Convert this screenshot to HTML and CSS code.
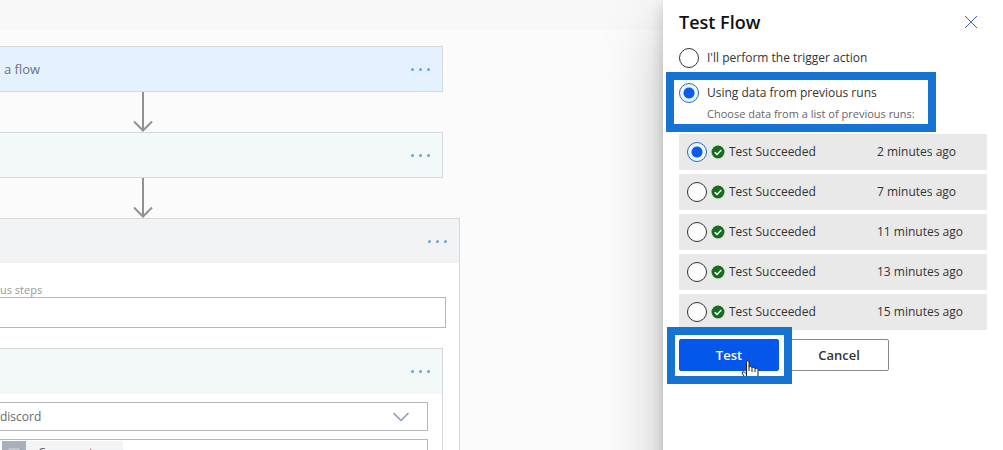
FILE: index.html
```html
<!DOCTYPE html>
<html lang="en">
<head>
<meta charset="utf-8">
<title>Test Flow</title>
<link rel="stylesheet" href="styles.css">
</head>
<body>
<div class="page">
	<main class="designer">
		<div class="toolbar"></div>
		<div class="canvas">
			<div class="card trigger">
				<span>a flow</span>
				<button class="dots" aria-label="Menu"><i></i><i></i><i></i></button>
			</div>
			<svg class="arrow" width="20" height="40" viewBox="0 0 20 40"><path d="M10 0V38M1 29.500L10 38.500L19 29.500"/></svg>
			<div class="card action">
				<button class="dots" aria-label="Menu"><i></i><i></i><i></i></button>
			</div>
			<svg class="arrow" width="20" height="40" viewBox="0 0 20 40"><path d="M10 0V38M1 29.500L10 38.500L19 29.500"/></svg>
			<div class="scope">
				<div class="scope-head">
					<button class="dots" aria-label="Menu"><i></i><i></i><i></i></button>
				</div>
				<label class="field-label" for="steps">us steps</label>
				<input class="field" id="steps" type="text">
				<div class="inner">
					<div class="inner-head">
						<button class="dots" aria-label="Menu"><i></i><i></i><i></i></button>
					</div>
					<div class="inner-body">
						<div class="picker">
							<select aria-label="Channel"><option>discord</option></select>
							<svg class="chevron" width="16" height="10" viewBox="0 0 16 10"><path d="M0.500 1L8 8.500L15.500 1"/></svg>
						</div>
						<div class="message">
							<div class="token">
								<span class="token-icon"><svg width="24" height="24" viewBox="0 0 24 24"><path d="M7 8h10v8H7zM7 11h10M12 8v8"/></svg></span>
								<span>Comment</span>
							</div>
						</div>
					</div>
				</div>
			</div>
		</div>
	</main>

	<form class="panel" onsubmit="return false">
		<div class="panel-head">
			<h1>Test Flow</h1>
			<button class="close" type="button" aria-label="Close"><svg width="12" height="12" viewBox="0 0 12 12"><path d="M0 0L12 12M12 0L0 12"/></svg></button>
		</div>
		<div class="option">
			<input type="radio" name="mode" id="manual">
			<label for="manual">I'll perform the trigger action</label>
		</div>
		<div class="marked option-marked">
			<div class="option">
				<input type="radio" name="mode" id="previous" checked>
				<label for="previous">Using data from previous runs</label>
			</div>
			<p class="hint">Choose data from a list of previous runs:</p>
		</div>
		<div class="runs">
			<div class="run">
				<input type="radio" name="run" id="run1" checked>
				<svg class="ok" width="14" height="14" viewBox="0 0 14 14"><circle cx="7" cy="7" r="6.500"/><path d="M3.700 7.200L6 9.400L10.300 5"/></svg>
				<label for="run1">Test Succeeded</label>
				<span>2 minutes ago</span>
			</div>
			<div class="run">
				<input type="radio" name="run" id="run2">
				<svg class="ok" width="14" height="14" viewBox="0 0 14 14"><circle cx="7" cy="7" r="6.500"/><path d="M3.700 7.200L6 9.400L10.300 5"/></svg>
				<label for="run2">Test Succeeded</label>
				<span>7 minutes ago</span>
			</div>
			<div class="run">
				<input type="radio" name="run" id="run3">
				<svg class="ok" width="14" height="14" viewBox="0 0 14 14"><circle cx="7" cy="7" r="6.500"/><path d="M3.700 7.200L6 9.400L10.300 5"/></svg>
				<label for="run3">Test Succeeded</label>
				<span>11 minutes ago</span>
			</div>
			<div class="run">
				<input type="radio" name="run" id="run4">
				<svg class="ok" width="14" height="14" viewBox="0 0 14 14"><circle cx="7" cy="7" r="6.500"/><path d="M3.700 7.200L6 9.400L10.300 5"/></svg>
				<label for="run4">Test Succeeded</label>
				<span>13 minutes ago</span>
			</div>
			<div class="run">
				<input type="radio" name="run" id="run5">
				<svg class="ok" width="14" height="14" viewBox="0 0 14 14"><circle cx="7" cy="7" r="6.500"/><path d="M3.700 7.200L6 9.400L10.300 5"/></svg>
				<label for="run5">Test Succeeded</label>
				<span>15 minutes ago</span>
			</div>
		</div>
		<div class="buttons">
			<div class="marked button-marked">
				<button class="btn primary" type="submit">Test</button>
				<svg class="hand" width="20" height="16" viewBox="0 0 20 16"><path d="M6.500 16V1.500Q7.800 0 9 1.500V7Q10.500 5.500 12 7.500Q13.500 6 15 8.500Q17 7.500 18 9.500V16M6.500 14L4.500 12Q2 11.200 2 13L4 16"/><path d="M9 7V11M12 7.500V12M15 8.500V12"/></svg>
			</div>
			<button class="btn" type="button">Cancel</button>
		</div>
	</form>
</div>
</body>
</html>
```
FILE: styles.css
```css
* {
	box-sizing: border-box;
}

body {
	margin: 0;
	font-family: "Open Sans", "Noto Sans", sans-serif;
	font-size: 12px;
	line-height: 20px;
	color: #333;
}

button, input, select {
	margin: 0;
	padding: 0;
	font: inherit;
	color: inherit;
}

.page {
	display: flex;
	height: 100vh;
	overflow: hidden;
}

/* designer */
.designer {
	flex: 1;
	min-width: 0;
	background: #fbfbfb;
}

.toolbar {
	height: 30px;
	background: #f8f8f8;
}

.canvas {
	display: flex;
	flex-direction: column;
	width: 460px;
	padding-top: 16px;
}

.card {
	display: flex;
	align-items: center;
	width: 443px;
	height: 46px;
	padding: 0 12px 0 4px;
	border: 1px solid #d5d8dc;
	border-left: 0;
	font-size: 13px;
	color: #6b7280;
}

.trigger {
	background: #e5f1fe;
}

.action, .inner-head {
	background: #f2f9f8;
}

.dots {
	display: flex;
	gap: 5px;
	margin-left: auto;
	border: 0;
	background: none;
}

.dots i {
	width: 3px;
	height: 3px;
	border-radius: 50%;
	background: #6ba3d0;
}

.arrow {
	margin-left: 133px;
	fill: none;
	stroke: #919191;
	stroke-width: 2;
}

.scope {
	display: flex;
	flex-direction: column;
	border: 1px solid #d5d8dc;
	border-left: 0;
	background: #fff;
}

.scope-head {
	display: flex;
	align-items: center;
	height: 44px;
	padding-right: 12px;
	background: #f2f3f5;
}

.field-label {
	margin-top: 20px;
	font-size: 11px;
	line-height: 14px;
	color: #999;
}

.field {
	width: 446px;
	height: 31px;
	border: 1px solid #b5b7ba;
	border-left: 0;
	background: #fff;
}

.inner {
	width: 443px;
	margin-top: 20px;
	border: 1px solid #d5d8dc;
	border-left: 0;
}

.inner-head {
	display: flex;
	align-items: center;
	height: 45px;
	padding-right: 12px;
}

.inner-body {
	display: flex;
	flex-direction: column;
	gap: 8px;
	padding: 8px 14px 8px 0;
}

.picker {
	position: relative;
	height: 29px;
}

.picker select {
	width: 100%;
	height: 100%;
	appearance: none;
	border: 1px solid #b5b7ba;
	border-left: 0;
	border-radius: 0;
	background: #fff;
	color: #666;
}

.chevron {
	position: absolute;
	right: 19px;
	top: 10px;
	fill: none;
	stroke: #8298b5;
	stroke-width: 1.5;
	pointer-events: none;
}

.message {
	height: 60px;
	padding: 1px 2px;
	border: 1px solid #b5b7ba;
	border-left: 0;
}

.token {
	display: flex;
	align-items: center;
	gap: 12px;
	width: 121px;
	height: 24px;
	background: #f3f4f5;
	color: #666;
}

.token-icon {
	display: flex;
	width: 24px;
	height: 24px;
	background: #a9b0bd;
}

.token-icon svg {
	fill: none;
	stroke: #d5d8de;
}

/* test panel */
.panel {
	position: relative;
	flex: none;
	width: 340px;
	height: calc(100vh + 80px);
	padding: 10px 16px;
	background: #fff;
	box-shadow: 0 26px 58px rgba(0, 0, 0, .22), 0 5px 14px rgba(0, 0, 0, .18);
}

.panel-head {
	display: flex;
	justify-content: space-between;
	align-items: center;
	height: 24px;
	padding-right: 10px;
}

h1 {
	margin: 0;
	font-size: 18px;
	font-weight: 600;
	line-height: 24px;
	color: #111;
}

.close {
	display: flex;
	border: 0;
	background: none;
}

.close svg {
	fill: none;
	stroke: #4a66b0;
}

.option {
	display: flex;
	align-items: center;
	gap: 8px;
	height: 20px;
}

.panel-head + .option {
	margin-top: 14px;
}

input[type=radio] {
	flex: none;
	width: 20px;
	height: 20px;
	appearance: none;
	border: 1px solid #333;
	border-radius: 50%;
	background: #fff;
}

input[type=radio]:checked {
	border-color: #2b67c4;
	background: radial-gradient(circle, #0b5cec 5px, #eef8ff 6px);
}

.hint {
	margin: 2px 0 0 28px;
	font-size: 11px;
	line-height: 18px;
	color: #666;
	white-space: nowrap;
}

/* thick blue frames over the panel */
.marked {
	position: relative;
}

.marked::after {
	content: "";
	position: absolute;
	border: 8px solid #1673d1;
	pointer-events: none;
}

.option-marked {
	width: 244px;
	margin-top: 15px;
}

.option-marked::after {
	inset: -11px -13px -9px -13px;
}

.runs {
	display: flex;
	flex-direction: column;
	gap: 4px;
	margin-top: 11px;
}

.run {
	display: flex;
	align-items: center;
	height: 36px;
	padding-left: 8px;
	background: #e9e9e9;
}

.ok {
	margin: 0 4px;
	fill: #12701c;
}

.ok path {
	fill: none;
	stroke: #fff;
	stroke-width: 1.5;
}

.run label {
	width: 148px;
}

.buttons {
	display: flex;
	gap: 10px;
	margin-top: 9px;
}

.btn {
	width: 100px;
	height: 32px;
	border: 1px solid #8a8886;
	border-radius: 2px;
	background: #fff;
	font-size: 13px;
	font-weight: 600;
}

.primary {
	display: block;
	border-color: #0557ec;
	background: #0557ec;
	color: #fff;
}

.button-marked {
	z-index: 1;
}

.button-marked::after {
	inset: -12px -13px -13px -12px;
	box-shadow: inset 0 0 0 4px #fff;
}

.hand {
	position: absolute;
	z-index: 1;
	left: 61px;
	top: 21px;
	fill: #fff;
	stroke: #222;
}
```
